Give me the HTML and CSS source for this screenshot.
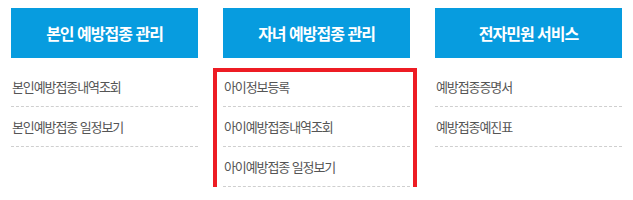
FILE: index.html
```html
<!DOCTYPE html>
<html lang="ko">
<head>
<meta charset="utf-8">
<link rel="stylesheet" href="styles.css">
</head>
<body>
<div class="menu">
  <section class="col">
    <h2 class="head">본인 예방접종 관리</h2>
    <ul class="list">
      <li>본인예방접종내역조회</li>
      <li>본인예방접종 일정보기</li>
    </ul>
  </section>
  <section class="col">
    <h2 class="head">자녀 예방접종 관리</h2>
    <ul class="list marked">
      <li>아이정보등록</li>
      <li>아이예방접종내역조회</li>
      <li>아이예방접종 일정보기</li>
    </ul>
  </section>
  <section class="col">
    <h2 class="head">전자민원 서비스</h2>
    <ul class="list">
      <li>예방접종증명서</li>
      <li>예방접종예진표</li>
    </ul>
  </section>
</div>
</body>
</html>
```
FILE: styles.css
```css
html, body {
  margin: 0;
  background: #fff;
}
body {
  font-family: "Noto Sans CJK KR", "Noto Sans", sans-serif;
}
.menu {
  display: grid;
  grid-template-columns: 187px 187px 187px;
  column-gap: 25px;
  padding: 8px 0 0 11px;
}
.col {
  display: flex;
  flex-direction: column;
}
.head {
  margin: 0;
  height: 50px;
  line-height: 50px;
  background: #079cdf;
  color: #fff;
  font-size: 16px;
  font-weight: 700;
  letter-spacing: -1px;
  text-align: center;
}
.list {
  list-style: none;
  margin: 9px 0 0;
  padding: 0;
  position: relative;
}
.list li {
  height: 39px;
  line-height: 39px;
  border-bottom: 1px dashed #cfcfcf;
  padding-left: 1px;
  font-size: 13px;
  letter-spacing: -1.1px;
  color: #555;
}
.marked::after {
  content: "";
  position: absolute;
  left: -10px;
  top: 1px;
  width: 204px;
  height: 126px;
  box-sizing: border-box;
  border: 4px solid #ed1c24;
}
```
